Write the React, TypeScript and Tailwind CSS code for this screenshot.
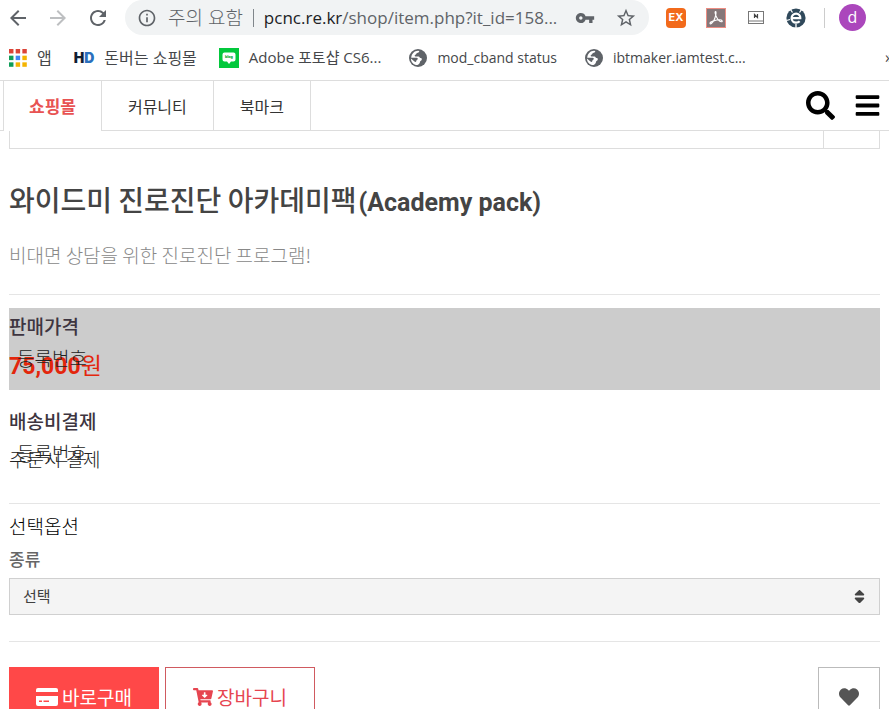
import type { ReactNode } from 'react';
import { MdArrowBack, MdArrowForward, MdInfoOutline, MdRefresh, MdStarBorder, MdVpnKey } from 'react-icons/md';
import { FaBars, FaCartArrowDown, FaHeart, FaSearch, FaSort } from 'react-icons/fa';

const tabs = [
  { label: '쇼핑몰', active: true },
  { label: '커뮤니티', active: false },
  { label: '북마크', active: false },
];

const appColors = ['#db4437', '#db4437', '#db4437', '#0f9d58', '#4285f4', '#f4b400', '#0f9d58', '#f4b400', '#f4b400'];

function AppsIcon() {
  return (
    <svg width="18" height="18" viewBox="0 0 17 17">
      {appColors.map((c, i) => (
        <rect key={i} x={(i % 3) * 6.3} y={Math.floor(i / 3) * 6.3} width="4.2" height="4.2" fill={c} />
      ))}
    </svg>
  );
}

function BlogIcon() {
  return (
    <span className="relative flex h-5 w-5 items-center justify-center bg-[#03c83c]">
      <svg width="20" height="20" viewBox="0 0 20 20" fill="#fff">
        <path d="M5.5 4.5h9a2 2 0 0 1 2 2v5a2 2 0 0 1-2 2H12l-2 2.4-2-2.4H5.5a2 2 0 0 1-2-2v-5a2 2 0 0 1 2-2z" />
      </svg>
      <span className="absolute top-1 font-['Roboto',sans-serif] text-[4px] leading-[10px] font-black text-[#03a834]">blog</span>
    </span>
  );
}

function GlobeIcon() {
  return (
    <svg width="18" height="18" viewBox="0 0 18 18">
      <circle cx="9" cy="9" r="9" fill="#5f6368" />
      <path
        d="M10.3 1.9c-.2 1.700-1.200 1.700-2.300 2-1 .3-.5 1.700-1.700 1.900-.8.100-.8 1.700.1 1.700h3.200c1 0 .9 1.500 1.900 1.500s1.500.7 1.300 1.600c-.2 1.200-1.500 1.100-1.800 2.300-.3 1.300-1 2.300-2.600 3.200-3.800-.1-6.500-3-6.500-6.600l3.600 3.100c.8.700 1.800.4 1.800-.6 0-1.300 1.500-1 1.500-2.200 0-.9-.9-1.100-1.900-1.100H2.200C2.600 4.600 5.500 1.800 9 1.800z"
        fill="#fff"
      />
    </svg>
  );
}

function AcrobatIcon() {
  return (
    <svg width="20" height="20" viewBox="0 0 20 20">
      <rect x="0.5" y="0.5" width="19" height="19" fill="#857779" stroke="#ec8d83" />
      <path
        d="M9.600 3.600c-1.300 0 .2 4.200 1.300 6.200 1.100 2 3.200 4 4.500 4 1.600 0 .9-1.900-1.700-2-3.400 0-9.600 1.700-9.700 3.400 0 1.500 2.400.5 4.200-3.400 1.300-2.900 2.500-8.200 1.400-8.200z"
        fill="none"
        stroke="#fff"
        strokeWidth="1.1"
      />
    </svg>
  );
}

function MonitorIcon() {
  return (
    <svg width="16" height="13" viewBox="0 0 16 13" fill="none" stroke="#777">
      <rect x="0.5" y="0.5" width="15" height="12" fill="#fff" />
      <path d="M1 10h14" />
      <path d="M6.5 7V3.500l3 3V3" stroke="#444" strokeWidth="1.2" />
    </svg>
  );
}

function OrbitIcon() {
  return (
    <svg width="20" height="20" viewBox="0 0 20 20" fill="none">
      <circle cx="10" cy="10" r="9.6" fill="#30495b" />
      <path d="M4.5 1.500l2 3M15.500 1.500l-2 3M10 20v-4M0.500 12.500l3.500-1" stroke="#fff" strokeWidth="1.3" />
      <path d="M6 10.200h8.300c.2-2.700-1.600-4.500-4.200-4.500-2.600 0-4.500 1.900-4.500 4.500s1.900 4.400 4.500 4.400c1.600 0 2.700-.5 3.600-1.400" stroke="#fff" strokeWidth="2.2" />
    </svg>
  );
}

function CardIcon() {
  return (
    <svg width="22" height="18" viewBox="0 0 22 18" fill="#fff">
      <path d="M2 0h18a2 2 0 0 1 2 2v2H0V2a2 2 0 0 1 2-2z" />
      <path fillRule="evenodd" d="M0 8h22v8a2 2 0 0 1-2 2H2a2 2 0 0 1-2-2zm3 4.500V14h3v-1.500zm4.500 0V14H13v-1.500z" />
    </svg>
  );
}

function Bookmark({ icon, className = '', children }: { icon: ReactNode; className?: string; children: ReactNode }) {
  return (
    <a href="#" className={`flex shrink-0 items-center gap-[10px] whitespace-nowrap ${className}`}>
      {icon}
      <span>{children}</span>
    </a>
  );
}

function Browser() {
  return (
    <header className="font-['Open_Sans','Noto_Sans_CJK_KR',sans-serif] text-[#45474a]">
      <div className="flex h-[35px] items-center pr-[23px] pl-[6px] text-[#5f6368]">
        <div className="flex shrink-0 gap-4">
          <button aria-label="뒤로"><MdArrowBack size={24} /></button>
          <button aria-label="앞으로" className="text-[#bdbfc1]"><MdArrowForward size={24} /></button>
          <button aria-label="새로고침"><MdRefresh size={24} /></button>
        </div>
        <div className="ml-[15px] flex h-[35px] min-w-0 flex-1 items-center rounded-full bg-[#f1f3f4] pr-3 pl-3">
          <MdInfoOutline size={20} className="shrink-0" />
          <span className="ml-[11px] shrink-0 text-[19px] leading-7 font-light">주의 요함</span>
          <span className="mx-[10px] h-[18px] w-px shrink-0 bg-[#80868b]" />
          <label htmlFor="url" className="shrink-0 text-[17px] text-[#202124]">pcnc.re.kr</label>
          <input id="url" readOnly value="/shop/item.php?it_id=158..." className="min-w-0 flex-1 bg-transparent text-[17px] outline-none" />
          <MdVpnKey size={20} className="mr-5 ml-2 shrink-0" />
          <MdStarBorder size={22} className="shrink-0" />
        </div>
        <div className="ml-[17px] flex shrink-0 items-center gap-5">
          <span className="flex h-5 w-5 items-center justify-center rounded-sm bg-[#f26a1b] font-['Inter',sans-serif] text-[11px] font-bold text-white">EX</span>
          <AcrobatIcon />
          <span className="flex w-5 justify-center"><MonitorIcon /></span>
          <OrbitIcon />
        </div>
        <span className="mr-[14px] ml-[18px] h-5 w-px bg-[#ccc]" />
        <button className="h-[27px] w-[27px] shrink-0 rounded-full bg-[#ab47bc] text-base leading-[27px] text-white">d</button>
      </div>
      <nav className="relative flex h-[45px] items-center gap-[22px] pl-[9px] text-[15px]">
        <Bookmark icon={<AppsIcon />} className="text-base">앱</Bookmark>
        <Bookmark
          className="text-base"
          icon={
            <span className="font-['Inter',sans-serif] text-sm font-black text-[#101e33]">
              H<span className="text-[#2a70bd]">D</span>
            </span>
          }
        >
          돈버는 쇼핑몰
        </Bookmark>
        <Bookmark icon={<BlogIcon />}>Adobe 포토샵 CS6...</Bookmark>
        <Bookmark icon={<GlobeIcon />} className="ml-[6px] text-sm">mod_cband status</Bookmark>
        <Bookmark icon={<GlobeIcon />} className="ml-[6px] text-sm">ibtmaker.iamtest.c...</Bookmark>
        <button aria-label="더보기" className="absolute top-[10px] -right-1 text-base">»</button>
      </nav>
    </header>
  );
}

function ShopNav() {
  return (
    <nav className="flex h-[51px] border-t border-[#ddd] text-[#333]">
      <div className="w-[3px] border-b border-[#ddd]" />
      {tabs.map((tab) => (
        <a
          key={tab.label}
          href="#"
          className={
            tab.active
              ? 'flex items-center border-x border-[#ddd] px-[25px] text-[17px] leading-6 font-bold text-[#e85353]'
              : 'flex items-center border-r border-b border-[#ddd] px-[26px] text-base'
          }
        >
          {tab.label}
        </a>
      ))}
      <div className="flex flex-1 items-center justify-end gap-[19px] border-b border-[#ddd] pr-2 text-black">
        <button aria-label="검색"><FaSearch size={29} /></button>
        <button aria-label="메뉴"><FaBars size={27} /></button>
      </div>
    </nav>
  );
}

function InfoRow({ title, children, shaded }: { title: string; children: ReactNode; shaded?: boolean }) {
  return (
    <div className={shaded ? 'relative h-[82px] bg-[#ccc] pt-1' : 'relative mt-[13px] h-[82px] pt-1'}>
      <h2 className="text-[19px] leading-7 font-medium text-[#3e3540]">{title}</h2>
      <div className="mt-[10px] text-[19px] leading-7 font-light text-[#222]">{children}</div>
      <span className="absolute top-9 left-2 text-[19px] leading-7 font-light text-[#222]">등록번호</span>
    </div>
  );
}

export default function App() {
  return (
    <div className="h-screen overflow-hidden bg-white font-['Noto_Sans_CJK_KR',sans-serif] text-[#333]">
      <Browser />
      <ShopNav />
      <main className="px-[9px]">
        <div className="flex h-[18px] justify-end border-x border-b border-[#ddd]">
          <div className="w-14 border-l border-[#ddd]" />
        </div>

        <h1 className="mt-[30px] text-[28px] leading-10 font-medium text-[#444]">
          와이드미 진로진단 아카데미팩
          <span className="ml-0.5 font-['Roboto',sans-serif] text-[25px] font-bold">(Academy pack)</span>
        </h1>
        <p className="mt-[18px] text-[19px] leading-7 font-light text-[#888]">비대면 상담을 위한 진로진단 프로그램!</p>

        <section className="mt-[25px] border-t border-[#e5e5e5] pt-[13px]">
          <InfoRow title="판매가격" shaded>
            <span className="text-[23px] leading-7 text-[#e3260c]">
              <strong className="font-['Roboto',sans-serif] font-bold">75,000</strong>
              <span className="font-normal">원</span>
            </span>
          </InfoRow>
          <InfoRow title="배송비결제">주문시 결제</InfoRow>
        </section>

        <section className="mt-[18px] border-t border-[#e5e5e5] pt-2">
          <h2 className="text-[19px] leading-7 font-light text-black">선택옵션</h2>
          <label htmlFor="kind" className="mt-[7px] block text-[17px] leading-6 font-medium text-[#666]">종류</label>
          <div className="relative mt-[7px]">
            <select id="kind" className="h-[37px] w-full appearance-none border border-[#d0d0d0] bg-[#f4f4f4] px-[13px] text-[15px] text-[#404040]">
              <option>선택</option>
            </select>
            <FaSort size={17} className="pointer-events-none absolute top-[10px] right-3 text-[#444]" />
          </div>
        </section>

        <section className="mt-[26px] flex gap-[6px] border-t border-[#e5e5e5] pt-[25px]">
          <button className="flex h-[60px] w-[150px] items-center justify-center gap-1 bg-[#ff4848] text-[19px] text-white">
            <CardIcon />
            바로구매
          </button>
          <button className="flex h-[60px] w-[150px] items-center justify-center gap-1 border border-[#d05a60] text-[19px] text-[#e64550]">
            <FaCartArrowDown size={20} />
            장바구니
          </button>
          <button aria-label="위시리스트" className="ml-auto flex h-[60px] w-[62px] items-center justify-center border border-[#bbb] text-[#555]">
            <FaHeart size={20} />
          </button>
        </section>
      </main>
    </div>
  );
}
